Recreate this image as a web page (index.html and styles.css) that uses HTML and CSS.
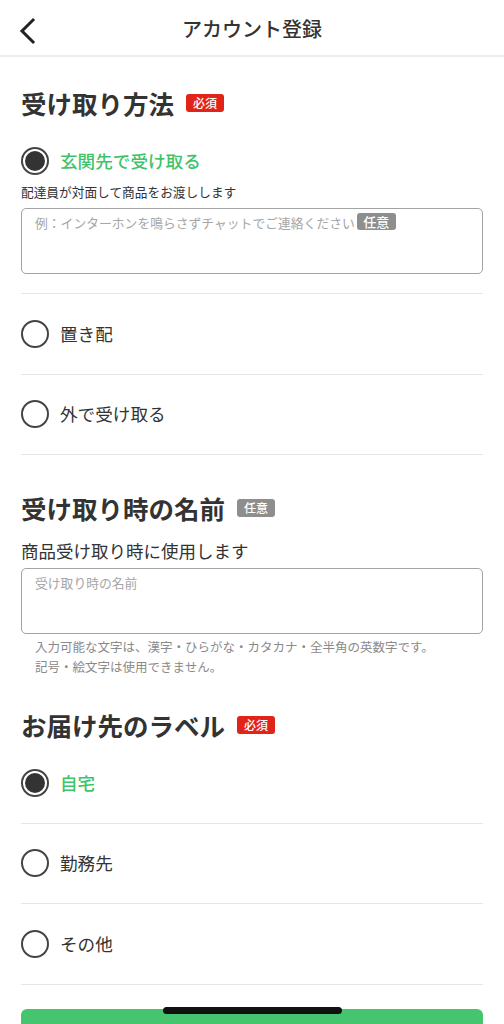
FILE: index.html
```html
<!DOCTYPE html>
<html lang="ja">
<head>
    <meta charset="UTF-8" />
    <meta name="viewport" content="width=device-width, initial-scale=1.0" />
    <title>アカウント登録</title>
    <link rel="stylesheet" href="styles.css">
</head>
<body>
    <header class="app-header">
        <button class="back-button" aria-label="戻る">
            <svg width="20" height="28" viewBox="0 0 20 28" aria-hidden="true">
                <polyline points="15,3 4,14 15,25" fill="none" stroke="#222" stroke-width="3" stroke-linecap="square" stroke-linejoin="miter" />
            </svg>
        </button>
        <h1 class="header-title">アカウント登録</h1>
    </header>

    <main class="content">
        <section class="section first">
            <h2 class="section-title">受け取り方法 <span class="badge required">必須</span></h2>

            <div class="option">
                <label class="radio-row">
                    <span class="radio checked"></span>
                    <span class="radio-label active">玄関先で受け取る</span>
                </label>
                <p class="option-note">配達員が対面して商品をお渡しします</p>
                <div class="text-box">
                    <span class="placeholder">例：インターホンを鳴らさずチャットでご連絡ください</span><span class="badge optional small">任意</span>
                </div>
            </div>

            <div class="option">
                <label class="radio-row">
                    <span class="radio"></span>
                    <span class="radio-label">置き配</span>
                </label>
            </div>

            <div class="option">
                <label class="radio-row">
                    <span class="radio"></span>
                    <span class="radio-label">外で受け取る</span>
                </label>
            </div>
        </section>

        <section class="section">
            <h2 class="section-title">受け取り時の名前 <span class="badge optional">任意</span></h2>
            <p class="field-label">商品受け取り時に使用します</p>
            <div class="text-box">
                <span class="placeholder">受け取り時の名前</span>
            </div>
            <p class="help-text">入力可能な文字は、漢字・ひらがな・カタカナ・全半角の英数字です。<br>記号・絵文字は使用できません。</p>
        </section>

        <section class="section">
            <h2 class="section-title">お届け先のラベル <span class="badge required">必須</span></h2>

            <div class="option">
                <label class="radio-row">
                    <span class="radio checked"></span>
                    <span class="radio-label active">自宅</span>
                </label>
            </div>

            <div class="option">
                <label class="radio-row">
                    <span class="radio"></span>
                    <span class="radio-label">勤務先</span>
                </label>
            </div>

            <div class="option">
                <label class="radio-row">
                    <span class="radio"></span>
                    <span class="radio-label">その他</span>
                </label>
            </div>
        </section>

        <button class="submit-button" aria-label="登録する"></button>
    </main>

    <div class="home-indicator"></div>
</body>
</html>
```

FILE: styles.css
```css
:root {
    --text-color: #333333;
    --text-muted: #8a8a8a;
    --placeholder: #a6a6a6;
    --green: #3fc36a;
    --button-green: #45c66e;
    --red: #e2231a;
    --gray-badge: #8e8e8e;
    --divider: #e6e6e6;
    --box-border: #a3a3a3;
}

* {
    box-sizing: border-box;
}

body {
    margin: 0;
    background-color: #ffffff;
    color: var(--text-color);
    font-family: "Noto Sans CJK JP", "Noto Sans", sans-serif;
    overflow: hidden;
}

p,
h1,
h2 {
    margin: 0;
}

.app-header {
    position: relative;
    height: 57px;
    display: flex;
    align-items: center;
    justify-content: center;
    border-bottom: 2px solid #ececec;
}

.back-button {
    position: absolute;
    left: 18px;
    top: 17px;
    padding: 0;
    border: none;
    background: none;
    display: flex;
}

.header-title {
    font-size: 20px;
    font-weight: 500;
    line-height: 28px;
    color: #333;
    margin-top: 2px;
}

.content {
    padding: 0 21px;
}

.section-title {
    display: flex;
    align-items: center;
    gap: 12px;
    height: 36px;
    font-size: 25.5px;
    font-weight: 700;
    line-height: 36px;
    margin-top: 35px;
}

.section.first .section-title {
    margin-top: 28px;
}

.badge {
    display: inline-flex;
    align-items: center;
    justify-content: center;
    width: 38px;
    height: 18px;
    border-radius: 3px;
    color: #ffffff;
    font-size: 12px;
    font-weight: 500;
    line-height: 1;
}

.badge.required {
    background-color: var(--red);
}

.badge.optional {
    background-color: var(--gray-badge);
}

.badge.small {
    width: 39px;
    height: 17px;
    font-size: 13px;
    margin-left: 2px;
    vertical-align: top;
}

.option {
    padding: 25.5px 0 26px;
    border-bottom: 1px solid var(--divider);
}

.section.first .option:first-of-type {
    padding-bottom: 19.5px;
}

.radio-row {
    display: flex;
    align-items: center;
    gap: 11px;
    height: 28px;
}

.radio {
    width: 28px;
    height: 28px;
    border-radius: 50%;
    border: 2px solid #444;
    padding: 2px;
    flex-shrink: 0;
}

.radio.checked::after {
    content: "";
    display: block;
    width: 100%;
    height: 100%;
    border-radius: 50%;
    background-color: #333;
}

.radio-label {
    font-size: 17.6px;
    font-weight: 400;
    line-height: 28px;
}

.radio-label.active {
    color: var(--green);
    font-weight: 500;
}

.option-note {
    margin-top: 7px;
    font-size: 12.7px;
    line-height: 20px;
}

.text-box {
    margin-top: 6px;
    height: 66px;
    border: 1.5px solid var(--box-border);
    border-radius: 5px;
    padding: 4px 13px;
    font-size: 12.8px;
    line-height: 20px;
}

.placeholder {
    color: var(--placeholder);
}

.field-label {
    margin-top: 13px;
    font-size: 17.5px;
    line-height: 24px;
}

.section .field-label + .text-box {
    margin-top: 5px;
}

.help-text {
    margin-top: 3px;
    padding-left: 14px;
    font-size: 12.5px;
    line-height: 20px;
    color: var(--text-muted);
}

.section:last-of-type .section-title {
    margin-top: 30px;
}

.submit-button {
    display: block;
    width: 100%;
    height: 56px;
    margin-top: 24px;
    border: none;
    border-radius: 6px;
    background-color: var(--button-green);
}

.home-indicator {
    position: fixed;
    left: 163px;
    top: 1007px;
    width: 179px;
    height: 7px;
    border-radius: 4px;
    background-color: #111111;
}
```
